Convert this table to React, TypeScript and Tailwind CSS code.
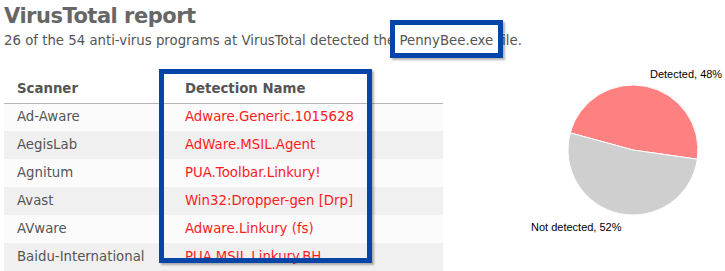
import React from "react";

type Row = { scanner: string; detection: string };

const rows: Row[] = [
  { scanner: "Ad-Aware", detection: "Adware.Generic.1015628" },
  { scanner: "AegisLab", detection: "AdWare.MSIL.Agent" },
  { scanner: "Agnitum", detection: "PUA.Toolbar.Linkury!" },
  { scanner: "Avast", detection: "Win32:Dropper-gen [Drp]" },
  { scanner: "AVware", detection: "Adware.Linkury (fs)" },
  { scanner: "Baidu-International", detection: "PUA.MSIL.Linkury.BH" },
];

// slice outline for a pie of radius r around (cx, cy), angles in degrees, clockwise on screen
function slice(cx: number, cy: number, r: number, from: number, to: number) {
  const rad = (d: number) => (d * Math.PI) / 180;
  const x1 = cx + r * Math.cos(rad(from));
  const y1 = cy + r * Math.sin(rad(from));
  const x2 = cx + r * Math.cos(rad(to));
  const y2 = cy + r * Math.sin(rad(to));
  const large = to - from > 180 ? 1 : 0;
  return `M${cx},${cy} L${x1.toFixed(2)},${y1.toFixed(2)} A${r},${r} 0 ${large} 1 ${x2.toFixed(2)},${y2.toFixed(2)} Z`;
}

function DetectionPie() {
  const start = 195.3;
  const detected = 0.48 * 360;
  return (
    <svg width="282" height="211" className="block shrink-0">
      <path d={slice(190, 90, 65, start, start + detected)} fill="#ff8080" stroke="#fff" strokeWidth="1" />
      <path d={slice(190, 90, 65, start + detected, start + 360)} fill="#cfcfcf" stroke="#fff" strokeWidth="1" />
      <text x="207" y="18" fontSize="11" fontFamily="'Liberation Sans', Arial, sans-serif" fill="#000">
        Detected, 48%
      </text>
      <text x="88" y="171" fontSize="11" fontFamily="'Liberation Sans', Arial, sans-serif" fill="#000">
        Not detected, 52%
      </text>
    </svg>
  );
}

export default function App() {
  return (
    <div className="relative h-[271px] w-[725px] overflow-hidden bg-white font-['DejaVu_Sans',Verdana,sans-serif]">
      <div className="pl-[4px] pt-[2px]">
        <h1 className="text-[21px] font-bold leading-[28px] tracking-[-0.5px] text-[#666]">VirusTotal report</h1>
        <p className="mt-[2px] text-[13.3px] leading-[18px] text-[#555]">
          26 of the 54 anti-virus programs at VirusTotal detected the{" "}
          <span className="relative inline-block">
            {/* blue highlight frame, white inside, laid over the neighbouring letters */}
            <span className="absolute -bottom-[8px] -left-[9px] -right-[10px] -top-[12px] border-[5px] border-[#0645a8] bg-white shadow-[2px_2px_2px_rgba(0,0,0,0.3)]" />
            <span className="relative">PennyBee.exe</span>
          </span>{" "}
          file.
        </p>
      </div>

      <div className="mt-[10px] flex">
        <div className="relative ml-[4px] mt-[15px] w-[439px] shrink-0">
          <table className="w-full border-collapse text-[13.3px] text-[#555]">
            <thead>
              <tr className="h-[28px] border-b border-[#b5b5b5] text-left">
                <th className="w-[168px] pl-[13px] font-bold">Scanner</th>
                <th className="pl-[13px] font-bold">Detection Name</th>
              </tr>
            </thead>
            <tbody>
              {rows.map((r, i) => (
                <tr key={r.scanner} className={`h-[28px] ${i % 2 ? "bg-[#f0f0f0]" : "bg-[#fbfbfb]"}`}>
                  <td className="pl-[13px]">{r.scanner}</td>
                  <td className="pl-[13px] text-[#ff1a1a]">{r.detection}</td>
                </tr>
              ))}
            </tbody>
          </table>
          {/* blue frame around the detection column */}
          <div className="pointer-events-none absolute left-[155px] top-[-6px] h-[194px] w-[213px] border-[5px] border-[#0645a8] shadow-[2px_2px_2px_rgba(0,0,0,0.3)]" />
        </div>
        <DetectionPie />
      </div>
    </div>
  );
}
